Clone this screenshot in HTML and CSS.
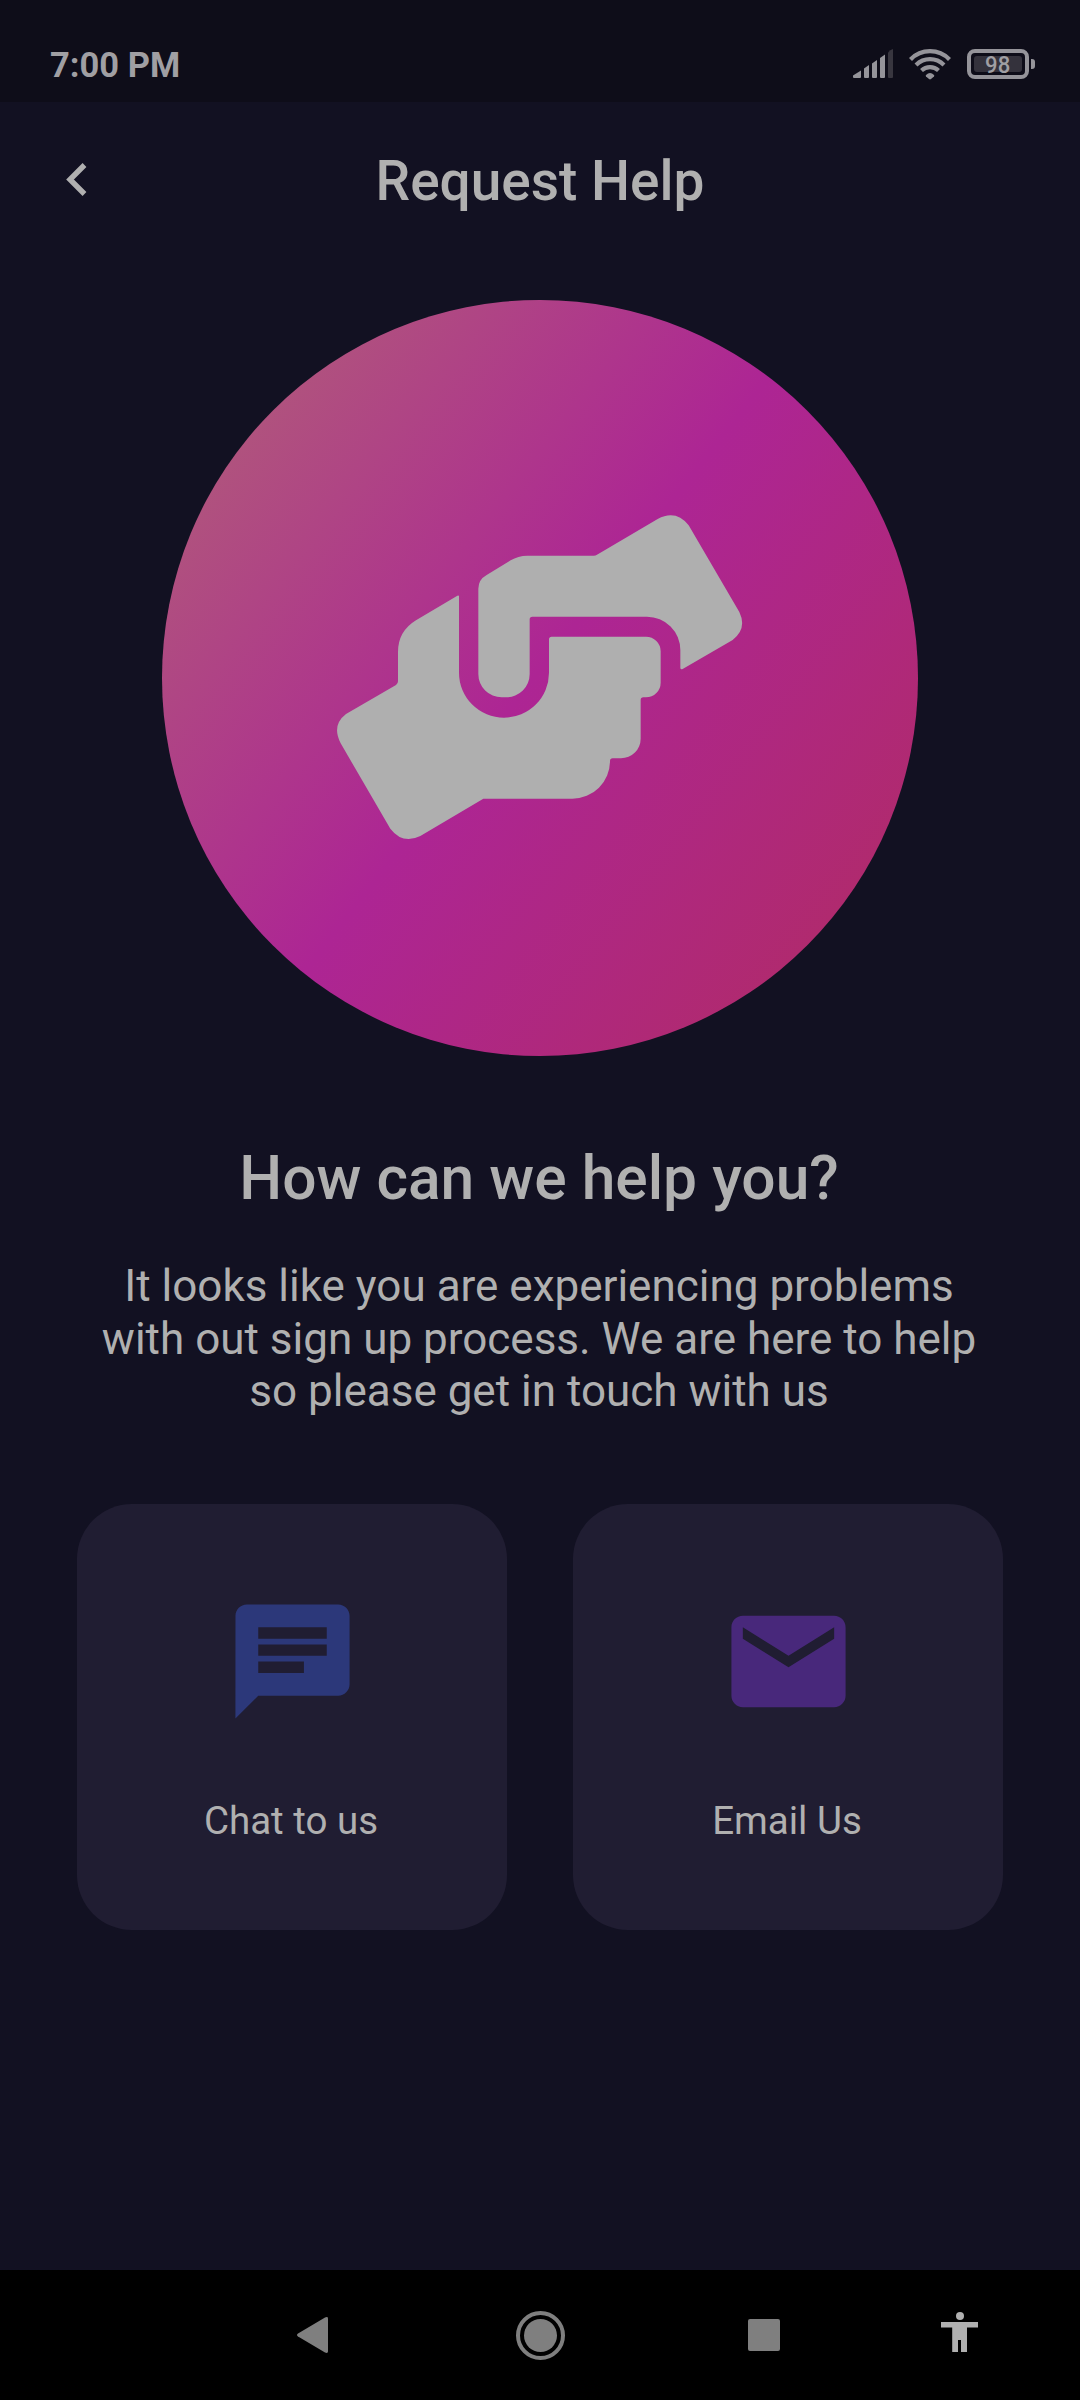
FILE: index.html
```html
<!DOCTYPE html>
<html lang="en">
<head>
<meta charset="utf-8">
<title>Request Help</title>
<link rel="stylesheet" href="styles.css">
</head>
<body>
<div class="screen">
  <header class="status">
    <span class="time">7:00 PM</span>
    <div class="indicators">
      <svg class="signal" width="40" height="30" viewBox="0 0 40 30" fill="#95949a">
        <path d="M0 26.500 8 21.500V28q0 1-1 1H1q-1 0-1-1z"/>
        <path d="M11 19.500 16 16V28q0 1-1 1h-3q-1 0-1-1z"/>
        <path d="M19 14.500 24 11V28q0 1-1 1h-3q-1 0-1-1z"/>
        <path d="M27 9 32 5.500V28q0 1-1 1h-3q-1 0-1-1z"/>
        <path fill="#38363f" d="M35 3.500Q37 .8 40 0V28q0 1-1 1h-3q-1 0-1-1z"/>
      </svg>
      <svg class="wifi" width="42" height="31" viewBox="0 0 42 31" fill="none" stroke="#95949a" stroke-width="4.200">
        <path d="M1.500 10.500Q9.500 2.200 21 2.200T40.500 10.500"/>
        <path d="M7 16Q13 10.200 21 10.200T35 16"/>
        <path d="M12.500 21.500Q16 18.200 21 18.200T29.500 21.500"/>
        <path fill="#95949a" stroke="none" d="M17 26q4-4 8 0 .6.700 0 1.400L22 30q-1 .8-2 0l-3-2.600q-.6-.7 0-1.400z"/>
      </svg>
      <div class="battery"><div class="charge"><span class="level">98</span></div></div>
    </div>
  </header>
  <nav class="topbar">
    <svg class="back" width="21" height="33" viewBox="0 0 21 33" fill="none" stroke="#b0b0b0" stroke-width="5.400"><path d="M18.500 2 4 16.500 18.500 31"/></svg>
    <h1 class="title">Request Help</h1>
  </nav>
  <main class="content">
    <div class="hero">
      <svg width="408" height="328" viewBox="0 0 1224 984" fill="#afafaf">
        <path d="M369 250V482A135 135 0 0 0 639 482V382q0-8 8-8H930A44 44 0 0 1 974 418V512A44 44 0 0 1 930 556H922q-8 0-8 8V680A59 59 0 0 1 855 739H830q-8 0-8 8A113 113 0 0 1 709 860H442L253 972Q200 998 163 950L14 694Q-14 640 30 606L180 519q6-4 6-11V420Q186 358 240 325L364 251q5-2 5 2z"/>
        <path d="M427 230Q427 203 452 189L524 145Q546 131 574 131H773q6 0 10-3L965 21Q1020-8 1058 40L1210 300Q1234 350 1190 384L1040 471q-6 3-7-3V414A100 100 0 0 0 933 314H589q-8 0-8 8V486A70 70 0 0 1 511 556H497A70 70 0 0 1 427 486z"/>
      </svg>
    </div>
    <h2 class="heading">How can we help you?</h2>
    <p class="message">It looks like you are experiencing problems<br>with out sign up process. We are here to help<br>so please get in touch with us</p>
    <div class="cards">
      <a class="card">
        <svg class="card-icon chat" viewBox="0 0 24 24"><path d="M20 2H4c-1.100 0-1.990.9-1.990 2L2 22l4-4h14c1.100 0 2-.9 2-2V4c0-1.100-.9-2-2-2zM6 9h12v2H6V9zm8 5H6v-2h8v2zm4-6H6V6h12v2z"/></svg>
        <span class="label">Chat to us</span>
      </a>
      <a class="card">
        <svg class="card-icon mail" viewBox="0 0 24 24"><path d="M20 4H4c-1.100 0-2 .9-2 2v12c0 1.100.9 2 2 2h16c1.100 0 2-.9 2-2V6c0-1.100-.9-2-2-2zm0 4-8 5-8-5V6l8 5 8-5v2z"/></svg>
        <span class="label">Email Us</span>
      </a>
    </div>
  </main>
  <footer class="sysnav">
    <svg class="nav-back" width="31" height="36" viewBox="0 0 31 36" fill="#7f7f7f"><path d="M1 16.500 28 .4q3-1 3 1V34.600q0 2-3 1L1 19.500q-2-1.500 0-3z"/></svg>
    <svg class="nav-home" width="49" height="49" viewBox="0 0 49 49"><circle cx="24.500" cy="24.500" r="22.500" fill="none" stroke="#7f7f7f" stroke-width="4"/><circle cx="24.500" cy="24.500" r="16.500" fill="#7f7f7f"/></svg>
    <div class="nav-recent"></div>
    <svg class="nav-access" width="37" height="40" viewBox="0 0 37 40" fill="#b0b0b0"><circle cx="19" cy="4" r="4"/><path d="M0 10H37V15.500H26V40H20V28H17V40H11.200V15.500H0z"/></svg>
  </footer>
</div>
</body>
</html>
```
FILE: styles.css
```css
* { box-sizing: border-box; margin: 0; }

body {
  background: #121122;
  color: #b0b0b0;
  font-family: Roboto, "Noto Sans", sans-serif;
}

.screen {
  width: 1080px;
  height: 2400px;
  display: flex;
  flex-direction: column;
  overflow: hidden;
}

.status {
  height: 102px;
  flex: none;
  display: flex;
  justify-content: space-between;
  padding: 49px 45px 0 50px;
  background: #0e0d19;
}
.time { font-size: 34.500px; line-height: 33px; font-weight: 700; color: #a09fa3; }
.indicators { display: flex; align-items: flex-start; }
.wifi { margin-left: 16px; }
.battery {
  position: relative;
  width: 62px;
  height: 30px;
  margin: 0 6px 0 16px;
  padding: 3px;
  border: 4px solid #95949a;
  border-radius: 8px;
}
.battery::after {
  content: "";
  position: absolute;
  left: 60px;
  top: 6px;
  width: 4px;
  height: 10px;
  border-radius: 0 3px 3px 0;
  background: #95949a;
}
.charge {
  display: flex;
  justify-content: center;
  height: 16px;
  border-radius: 3px;
  background: #34323c;
  color: #a09fa3;
  font-size: 24px;
  font-weight: 500;
  line-height: 18px;
}
.level { transform: scaleX(0.92); }

.topbar {
  height: 198px;
  flex: none;
  display: grid;
  grid-template-columns: 80px 1fr 80px;
  padding: 44px 0 0;
}
.back { margin: 17px 0 0 66px; }
.title { font-size: 55px; line-height: 70px; font-weight: 500; text-align: center; }

.content {
  flex: 1;
  display: flex;
  flex-direction: column;
  align-items: center;
}
.hero {
  width: 756px;
  height: 756px;
  flex: none;
  display: flex;
  align-items: center;
  justify-content: center;
  padding-bottom: 5px;
  border-radius: 50%;
  background: linear-gradient(128deg, #b16475, #ad2594 49.500%, #b12c60);
}
.heading {
  margin-top: 85px;
  padding-right: 2px;
  font-size: 60.500px;
  line-height: 76px;
  font-weight: 500;
}
.message {
  margin-top: 43px;
  padding-right: 2px;
  font-size: 44px;
  line-height: 52.500px;
  text-align: center;
}
.cards { display: flex; gap: 66px; margin-top: 86.500px; }
.card {
  width: 430px;
  height: 426px;
  display: flex;
  flex-direction: column;
  align-items: center;
  padding-top: 88.500px;
  border-radius: 55px;
  background: #201d32;
}
.card-icon { width: 137px; height: 137px; margin-bottom: 68.500px; }
.label { padding-right: 2px; font-size: 38.500px; line-height: 46px; }
.chat { fill: #2c387a; }
.mail { fill: #48287b; }

.sysnav {
  height: 130px;
  flex: none;
  display: flex;
  align-items: center;
  padding-left: 297px;
  background: #000;
}
.nav-home { margin-left: 188px; }
.nav-recent { width: 32px; height: 32px; margin-left: 183px; border-radius: 2px; background: #7f7f7f; }
.nav-access { margin: -6px 0 0 161px; }
```
